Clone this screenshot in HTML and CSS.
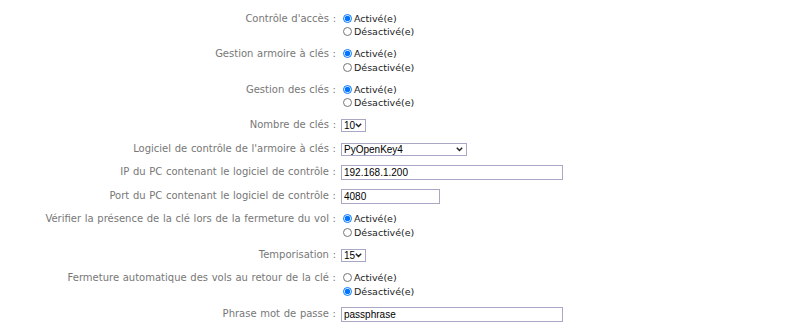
FILE: index.html
```html
<!DOCTYPE html>
<html lang="fr">
<head>
    <meta charset="UTF-8">
    <title>Configuration</title>
    <link rel="stylesheet" href="styles.css">
</head>
<body>
    <form class="config-form">
        <div class="row">
            <label class="row-label">Contrôle d'accès :</label>
            <div class="choices">
                <label class="choice"><input type="radio" name="acces" checked>Activé(e)</label>
                <label class="choice"><input type="radio" name="acces">Désactivé(e)</label>
            </div>
        </div>
        <div class="row">
            <label class="row-label">Gestion armoire à clés :</label>
            <div class="choices">
                <label class="choice"><input type="radio" name="armoire" checked>Activé(e)</label>
                <label class="choice"><input type="radio" name="armoire">Désactivé(e)</label>
            </div>
        </div>
        <div class="row">
            <label class="row-label">Gestion des clés :</label>
            <div class="choices">
                <label class="choice"><input type="radio" name="cles" checked>Activé(e)</label>
                <label class="choice"><input type="radio" name="cles">Désactivé(e)</label>
            </div>
        </div>
        <div class="row">
            <label class="row-label">Nombre de clés :</label>
            <div class="field">
                <select class="select-field small">
                    <option>10</option>
                </select>
            </div>
        </div>
        <div class="row">
            <label class="row-label">Logiciel de contrôle de l'armoire à clés :</label>
            <div class="field">
                <select class="select-field wide">
                    <option>PyOpenKey4</option>
                </select>
            </div>
        </div>
        <div class="row">
            <label class="row-label">IP du PC contenant le logiciel de contrôle :</label>
            <div class="field">
                <input type="text" class="text-field long" value="192.168.1.200">
            </div>
        </div>
        <div class="row">
            <label class="row-label">Port du PC contenant le logiciel de contrôle :</label>
            <div class="field">
                <input type="text" class="text-field short" value="4080">
            </div>
        </div>
        <div class="row">
            <label class="row-label">Vérifier la présence de la clé lors de la fermeture du vol :</label>
            <div class="choices">
                <label class="choice"><input type="radio" name="verif" checked>Activé(e)</label>
                <label class="choice"><input type="radio" name="verif">Désactivé(e)</label>
            </div>
        </div>
        <div class="row">
            <label class="row-label">Temporisation :</label>
            <div class="field">
                <select class="select-field small">
                    <option>15</option>
                </select>
            </div>
        </div>
        <div class="row">
            <label class="row-label">Fermeture automatique des vols au retour de la clé :</label>
            <div class="choices">
                <label class="choice"><input type="radio" name="auto">Activé(e)</label>
                <label class="choice"><input type="radio" name="auto" checked>Désactivé(e)</label>
            </div>
        </div>
        <div class="row">
            <label class="row-label">Phrase mot de passe :</label>
            <div class="field">
                <input type="text" class="text-field long" value="passphrase">
            </div>
        </div>
    </form>
</body>
</html>
```

FILE: styles.css
```css
body {
    margin: 0;
    background: #fff;
    font-family: "DejaVu Sans", Verdana, sans-serif;
}
.config-form {
    display: grid;
    grid-template-columns: 337px auto;
    row-gap: 8.5px;
    padding-top: 11.5px;
}
.row {
    display: contents;
}
.row-label {
    text-align: right;
    color: #777;
    font-size: 10px;
    line-height: 14px;
    word-spacing: 0.5px;
    padding-right: 1px;
}
.choices {
    display: flex;
    flex-direction: column;
    padding-left: 6px;
}
.choice {
    display: flex;
    align-items: center;
    height: 13.5px;
    font-size: 9.5px;
    color: #222;
}
.choice input {
    width: 9px;
    height: 9px;
    margin: 0 2px 0 0;
}
.field {
    display: flex;
    align-items: center;
    height: 15px;
    padding-left: 4px;
}
.select-field,
.text-field {
    font-family: "Liberation Sans", Arial, sans-serif;
    font-size: 10px;
    color: #000;
    border: 1px solid #a9a8c4;
    background-color: #fff;
    border-radius: 0;
    box-sizing: border-box;
}
.select-field {
    appearance: none;
    height: 13px;
    padding: 0 0 0 2px;
    line-height: 11px;
    background-image: url("data:image/svg+xml,%3Csvg xmlns='http://www.w3.org/2000/svg' width='7' height='5' viewBox='0 0 7 5'%3E%3Cpath d='M0.8 0.8 L3.5 3.5 L6.2 0.8' fill='none' stroke='%23222' stroke-width='1.5'/%3E%3C/svg%3E");
    background-repeat: no-repeat;
    background-position: right 3px center;
}
.select-field.small {
    width: 25px;
}
.select-field.wide {
    width: 126px;
}
.text-field {
    height: 15px;
    padding: 0 2px;
}
.text-field.long {
    width: 222px;
}
.text-field.short {
    width: 99px;
}
```
